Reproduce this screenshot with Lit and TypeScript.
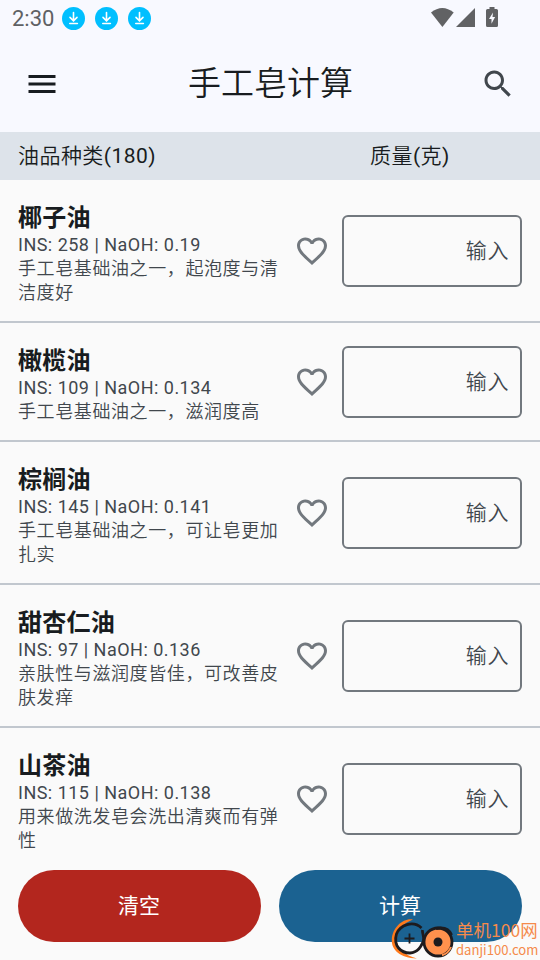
import { LitElement, html, css } from "lit";
import { customElement, property } from "lit/decorators.js";

interface Oil {
  name: string;
  ins: number;
  naoh: string;
  note: string;
}

const OILS: Oil[] = [
  { name: "椰子油", ins: 258, naoh: "0.19", note: "手工皂基础油之一，起泡度与清洁度好" },
  { name: "橄榄油", ins: 109, naoh: "0.134", note: "手工皂基础油之一，滋润度高" },
  { name: "棕榈油", ins: 145, naoh: "0.141", note: "手工皂基础油之一，可让皂更加扎实" },
  { name: "甜杏仁油", ins: 97, naoh: "0.136", note: "亲肤性与滋润度皆佳，可改善皮肤发痒" },
  { name: "山茶油", ins: 115, naoh: "0.138", note: "用来做洗发皂会洗出清爽而有弹性" },
];

@customElement("status-bar")
class StatusBar extends LitElement {
  static styles = css`
    :host {
      display: flex;
      align-items: center;
      height: 36px;
      padding: 0 41px 0 12px;
      color: #5f6164;
      font: 400 22px/36px Roboto, sans-serif;
      box-sizing: border-box;
    }
    .time { width: 50px; padding-top: 2px; }
    .note { width: 23px; height: 23px; margin-right: 10px; margin-top: 1px; }
    .gap { flex: 1; }
    .system { display: block; margin-top: -2px; }
  `;
  render() {
    const note = html`<svg class="note" viewBox="0 0 23 23">
      <circle cx="11.5" cy="11.5" r="11.5" fill="#00bfff" />
      <path d="M11.5 5.5v8M8 10.4l3.5 3.4 3.5-3.4M7.8 16.5h7.6" fill="none" stroke="#fff" stroke-width="1.6" stroke-linecap="round" />
    </svg>`;
    return html`
      <span class="time">2:30</span>${note}${note}${note}
      <span class="gap"></span>
      <svg class="system" width="69" height="22" viewBox="430 6 69 22" fill="#616264">
        <path d="M431 12.6Q442.300 3.400 453.700 12.600L442.400 27Z" />
        <path d="M456 27L475 8V27Z" />
        <path fill-rule="evenodd" d="M489.500 7h5v2h2q1.500 0 1.500 1.500v15q0 1.500-1.500 1.500h-9q-1.500 0-1.500-1.500v-15q0-1.500 1.500-1.500h2zM493 12.500l-4 6.500h2.500v4.700l3.600-6.700h-2.600z" />
      </svg>`;
  }
}

@customElement("oil-row")
class OilRow extends LitElement {
  @property({ attribute: false }) oil!: Oil;
  static styles = css`
    :host {
      display: flex;
      align-items: center;
      padding: 17px 18px 16px;
      border-bottom: 2px solid #c1c7ce;
    }
    .text {
      width: 264px;
      color: #41474d;
      font-size: 18px;
      line-height: 24px;
      letter-spacing: 0.6px;
    }
    .name {
      box-sizing: border-box;
      height: 36px;
      padding-top: 3px;
      color: #181c20;
      font-size: 24px;
      line-height: 36px;
      font-weight: 700;
      letter-spacing: 0.225px;
    }
    .values { letter-spacing: 0.48px; }
    .note { font-weight: 350; }
    .heart { width: 36px; height: 36px; margin: 0 12px; fill: #72787e; }
    .field {
      flex: 1;
      height: 72px;
      margin-bottom: 1px;
      box-sizing: border-box;
      border: 2px solid #72787e;
      border-radius: 6px;
      padding-right: 11px;
      color: #41474d;
      font-size: 21px;
      line-height: 69px;
      font-weight: 350;
      letter-spacing: 0.6px;
      text-align: right;
    }
  `;
  render() {
    const { name, ins, naoh, note } = this.oil;
    return html`
      <div class="text">
        <div class="name">${name}</div>
        <div class="values">INS: ${ins} | NaOH: ${naoh}</div>
        <div class="note">${note}</div>
      </div>
      <svg class="heart" viewBox="0 0 24 24">
        <path d="M16.500 3c-1.740 0-3.410.81-4.500 2.090C10.910 3.810 9.240 3 7.500 3 4.420 3 2 5.420 2 8.500c0 3.780 3.400 6.860 8.550 11.540L12 21.350l1.450-1.320C18.600 15.360 22 12.280 22 8.500 22 5.420 19.580 3 16.500 3zm-4.400 15.550l-.1.100-.1-.1C7.140 14.240 4 11.390 4 8.500 4 6.500 5.500 5 7.500 5c1.540 0 3.040.99 3.570 2.360h1.870C13.460 5.990 14.960 5 16.500 5c2 0 3.500 1.500 3.500 3.500 0 2.890-3.140 5.740-7.900 10.050z" />
      </svg>
      <div class="field">输入</div>`;
  }
}

@customElement("site-badge")
class SiteBadge extends LitElement {
  static styles = css`
    :host {
      display: flex;
      color: #f58a4b;
      font-family: "Noto Sans CJK SC", sans-serif;
      font-weight: 400;
    }
    .words { white-space: nowrap; padding-top: 1px; }
    .cn { font-size: 17.500px; line-height: 26px; }
    .url { font-size: 13.100px; line-height: 13px; }
  `;
  render() {
    return html`
      <svg width="66" height="44" viewBox="390 916 66 44" fill="none">
        <path d="M413 919.500C404 917.500 392 927 391.800 940C391.500 950 400 958 417 958.500C404 955 396 948 397 938C398 928 404 923 413 919.500Z" fill="#ff7a1c" />
        <path d="M421.500 928C413 920 400 925 396.500 934C393 946 401 953 410 953C419 952.500 421.500 945 423.500 941C424.500 937 422 933 422.500 930" stroke="#1d1b1e" stroke-width="2.800" />
        <path d="M404.500 938.500h10M409.500 933.500v10" stroke="#1d1b1e" stroke-width="1.800" />
        <circle cx="438" cy="942" r="14" fill="#ff914d" stroke="#1d1b1e" stroke-width="2.800" />
        <path d="M436 928.500Q448 926 451.500 935" stroke="#1d1b1e" stroke-width="3" />
        <circle cx="438" cy="942" r="4.500" fill="#1d1b1e" />
        <path d="M442 955.300A14 14 0 0 0 451 947" stroke="#ff914d" stroke-width="2" />
      </svg>
      <div class="words"><div class="cn">单机100网</div><div class="url">danji100.com</div></div>`;
  }
}

@customElement("app-root")
class AppRoot extends LitElement {
  static styles = css`
    :host {
      display: flex;
      flex-direction: column;
      position: relative;
      width: 540px;
      height: 960px;
      overflow: hidden;
      background: #fafafa;
      color: #181c20;
      font-family: Roboto, "Noto Sans CJK SC", sans-serif;
      font-weight: 400;
    }
    .top { flex: none; height: 132px; background: #f8f9ff; }
    .bar {
      display: flex;
      align-items: center;
      justify-content: space-between;
      height: 96px;
      padding: 0 24px;
    }
    .title { font-size: 33px; line-height: 42px; font-weight: 350; padding-left: 1px; }
    .icon { width: 36px; height: 36px; fill: #181c20; }
    .search { fill: #41474d; }
    .heads {
      flex: none;
      display: flex;
      height: 48px;
      background: #dde3ea;
      font-size: 21px;
      line-height: 48px;
      font-weight: 350;
      letter-spacing: 0.45px;
    }
    .count { font-weight: 400; }
    .kind { width: 352px; padding-left: 18px; }
    .list { flex: 1; min-height: 0; overflow: hidden; }
    .actions { flex: none; display: flex; gap: 18px; padding: 18px; background: #fafafa; }
    .button {
      flex: 1;
      height: 72px;
      border-radius: 36px;
      color: #fff;
      font-size: 21px;
      line-height: 73px;
      text-align: center;
      text-indent: -1px;
    }
    .clear { background: #b3261e; }
    .calc { background: #1b6291; }
    .badge { position: absolute; left: 390px; top: 916px; }
  `;
  render() {
    return html`
      <header class="top">
        <status-bar></status-bar>
        <div class="bar">
          <svg class="icon" viewBox="0 0 24 24"><path d="M3 18h18v-2H3v2zm0-5h18v-2H3v2zm0-7v2h18V6H3z" /></svg>
          <div class="title">手工皂计算</div>
          <svg class="icon search" viewBox="0 0 24 24"><path d="M15.500 14h-.79l-.28-.27C15.410 12.590 16 11.110 16 9.500 16 5.910 13.090 3 9.500 3S3 5.910 3 9.500 5.910 16 9.500 16c1.610 0 3.090-.59 4.230-1.570l.27.28v.79l5 4.990L20.490 19l-4.990-5zm-6 0C7.010 14 5 11.990 5 9.500S7.010 5 9.500 5 14 7.010 14 9.500 11.990 14 9.500 14z" /></svg>
        </div>
      </header>
      <div class="heads"><div class="kind">油品种类<span class="count">(180)</span></div><div>质量<span class="count">(</span>克<span class="count">)</span></div></div>
      <main class="list">${OILS.map((oil) => html`<oil-row .oil=${oil}></oil-row>`)}</main>
      <footer class="actions">
        <div class="button clear">清空</div>
        <div class="button calc">计算</div>
      </footer>
      <site-badge class="badge"></site-badge>`;
  }
}
